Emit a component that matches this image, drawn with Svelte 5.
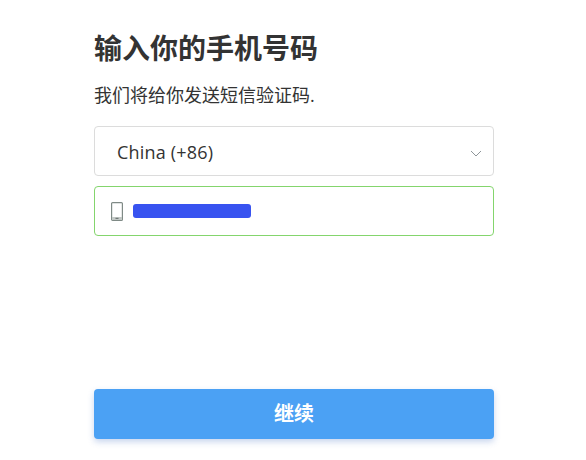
<script>
  const country = 'China (+86)';
</script>

<div class="page">
  <h1>输入你的手机号码</h1>
  <p class="sub">我们将给你发送短信验证码.</p>

  <div class="field select">
    <span class="country">{country}</span>
    <svg class="chev" width="12" height="7" viewBox="0 0 12 7" fill="none"><path d="M1 1l5 5 5-5" stroke="#8f969a" stroke-width="1"/></svg>
  </div>

  <div class="field phone">
    <svg class="mobile" width="12" height="19" viewBox="0 0 12 19" fill="none">
      <rect x="0.6" y="0.6" width="10.8" height="17.8" rx="1" stroke="#7f8a86" stroke-width="1.2"/>
      <rect x="1" y="15" width="10" height="3" fill="#c3c9c6"/>
      <rect x="4.5" y="15.8" width="3" height="1.2" fill="#6f7775"/>
    </svg>
    <span class="mask"></span>
  </div>

  <button class="next">继续</button>
</div>

<style>
  :global(body) { background: #fff; }
  .page { width: 400px; height: 460px; margin-left: 94px; padding-top: 28px; box-sizing: border-box; display: flex; flex-direction: column; color: #333; font-family: "Open Sans", "Noto Sans CJK SC", sans-serif; }
  h1 { margin: 0; font-size: 28px; line-height: 40px; font-weight: 700; }
  .sub { margin: 14px 0 0; font-size: 18px; line-height: 26px; }
  .field { height: 50px; box-sizing: border-box; border-radius: 4px; display: flex; align-items: center; background: #fff; }
  .select { margin-top: 18px; border: 1px solid #dcdcdc; padding: 0 11px 0 22px; justify-content: space-between; }
  .country { font-size: 18px; letter-spacing: 0.2px; color: #333; position: relative; top: 1px; }
  .chev { position: relative; top: 2px; }
  .phone { margin-top: 10px; border: 1px solid #84d56d; padding-left: 16px; gap: 10px; }
  .mask { width: 118px; height: 14px; background: #3853f0; border-radius: 3px; }
  .next { margin-top: auto; margin-bottom: 21px; height: 50px; width: 100%; padding: 0 0 3px; border: 0; border-radius: 4px; background: #4ba1f4; color: #fff; font: inherit; font-size: 20px; font-weight: 700; box-shadow: 0 3px 6px rgba(75, 120, 200, 0.3); }
</style>
